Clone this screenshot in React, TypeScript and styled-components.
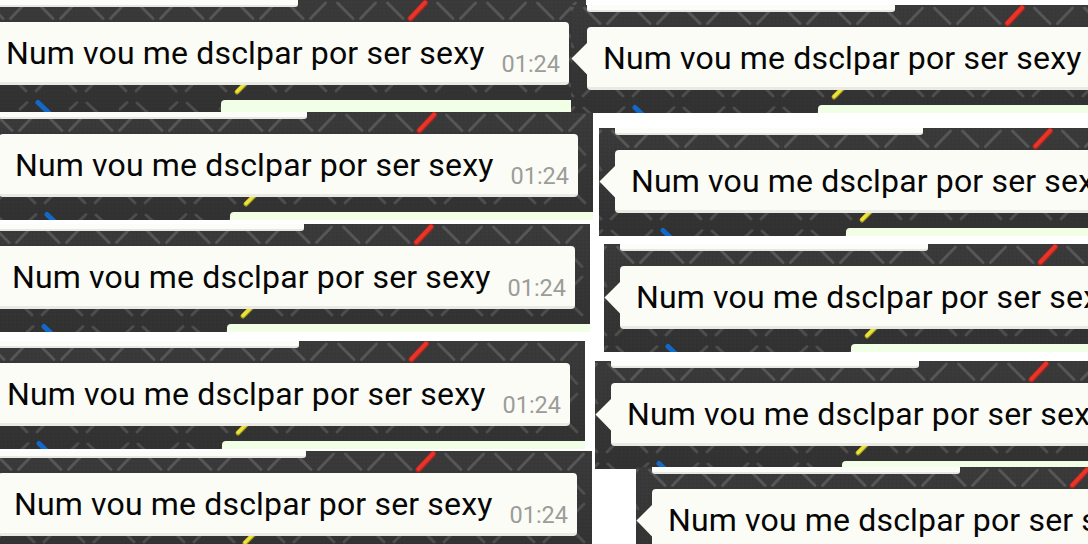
import React from "react";
import styled, { createGlobalStyle } from "styled-components";

interface StripProps {
  x: number; // left edge of the strip
  gap?: number; // white space above
  width?: number;
  height?: number;
}

const leftStrips: StripProps[] = [
  { x: -26, width: 612, height: 112 },
  { x: -17 },
  { x: -20, gap: 4 },
  { x: -25, gap: 9 },
  { x: -18, gap: 2 },
];

const rightStrips: StripProps[] = [
  { x: 0, gap: 5 },
  { x: 28, gap: 15 },
  { x: 33, gap: 8 },
  { x: 24, gap: 9 },
  { x: 65, gap: -2 },
];

const columns = Array.from({ length: 14 }, (_, i) => i - 1);

function Wallpaper() {
  return (
    <WallpaperSvg width="612" height="112" viewBox="-16 0 612 112">
      <defs>
        <linearGradient id="shade" x1="0" y1="0" x2="0" y2="1">
          <stop offset="0" stopColor="#3b3b3c" />
          <stop offset="1" stopColor="#323232" />
        </linearGradient>
        <pattern id="weave" width="4" height="4" patternUnits="userSpaceOnUse">
          <path d="M0 .5H4M.5 0V4" stroke="#000" strokeOpacity=".03" />
        </pattern>
      </defs>
      <rect x="-16" width="612" height="112" fill="url(#shade)" />
      <rect x="-16" width="612" height="112" fill="url(#weave)" />
      <g stroke="#565657" strokeWidth="3" strokeLinecap="round">
        {columns.map((k) => (
          <g key={k} transform={`translate(${k * 50} 0)`}>
            <path d="M47.500 3L63 18.500" />
            {k !== 8 && <path d="M20.500 18.500L35.500 3" />}
            <path d="M27 82L36 91" stroke="#4d4d4d" />
            {k !== 4 && <path d="M46 91L55 82" stroke="#4d4d4d" />}
            <path d="M30 109L37 102.500" stroke="#4d4d4d" />
            {k !== 0 && <path d="M47 103L58 113" stroke="#4d4d4d" />}
          </g>
        ))}
        <path d="M577 33L586 42.500M586 53L578 61M-20 33L-14 42M-14 53L-20 61" stroke="#4d4d4d" />
      </g>
      <g strokeWidth="5" strokeLinecap="round">
        <path d="M420.500 18.500L435 3" stroke="#a8261f" strokeWidth="6" />
        <path d="M420.500 18L435 2.500" stroke="#e8352a" strokeWidth="4" />
        <path d="M247 92L257 82" stroke="#9a931c" />
        <path d="M247 91.500L257 81.500" stroke="#ede23a" strokeWidth="3.500" />
        <path d="M48 102.500L60 114" stroke="#1269c7" />
      </g>
    </WallpaperSvg>
  );
}

function Strip(props: StripProps) {
  return (
    <StripWrapper
      $x={props.x}
      $gap={props.gap ?? 0}
      $width={props.width ?? 610}
      $height={props.height ?? 108}
    >
      <Wallpaper />
      <PreviousMessage />
      <Bubble>
        <Tail width="16" height="32" viewBox="0 0 16 32">
          <path d="M16 0L.5 15.500L16 31.500Z" fill="#fbfcf6" />
        </Tail>
        <Message>Num vou me dsclpar por ser sexy</Message>
        <Time>01:24</Time>
      </Bubble>
      <NextMessage />
    </StripWrapper>
  );
}

export default function App() {
  return (
    <Page>
      <GlobalStyle />
      <LeftColumn>
        {leftStrips.map((strip, i) => (
          <Strip key={i} {...strip} />
        ))}
      </LeftColumn>
      <RightColumn>
        {rightStrips.map((strip, i) => (
          <Strip key={i} {...strip} />
        ))}
      </RightColumn>
    </Page>
  );
}

const GlobalStyle = createGlobalStyle`
  body {
    margin: 0;
    background-color: #fff;
    font-family: Roboto, "Liberation Sans", sans-serif;
  }
`;

const Page = styled.main`
  display: flex;
  width: 1088px;
  height: 544px;
  overflow: hidden;
  background-color: #fff;
`;

const Column = styled.div`
  display: flex;
  flex-direction: column;
  align-items: flex-start;
`;

const LeftColumn = styled(Column)`
  flex: 0 0 571px;
  width: 571px;
`;

const RightColumn = styled(Column)`
  flex: 0 0 517px;
  width: 517px;
  z-index: 1;
`;

const StripWrapper = styled.section<{
  $x: number;
  $gap: number;
  $width: number;
  $height: number;
}>`
  position: relative;
  display: flex;
  flex-direction: column;
  flex-shrink: 0;
  box-sizing: border-box;
  width: ${(props) => props.$width}px;
  height: ${(props) => props.$height}px;
  margin-top: ${(props) => props.$gap}px;
  margin-left: ${(props) => props.$x}px;
  padding-left: 16px;
  overflow: hidden;
`;

const WallpaperSvg = styled.svg`
  position: absolute;
  top: 0;
  left: 0;
`;

const PreviousMessage = styled.div`
  position: relative;
  flex-shrink: 0;
  box-sizing: border-box;
  width: 308px;
  height: 7px;
  background-color: #fcfcf9;
  border-bottom: 2px solid #e7e8e3;
  border-radius: 0 0 3px 3px;
`;

const Bubble = styled.div`
  position: relative;
  display: flex;
  flex-shrink: 0;
  align-items: baseline;
  box-sizing: border-box;
  width: 579px;
  height: 63px;
  margin-top: 15px;
  padding: 12px 9px 0 16px;
  background-color: #fbfcf6;
  border-bottom: 3px solid #e9eae4;
  border-radius: 4px;
`;

const Tail = styled.svg`
  position: absolute;
  top: 16px;
  left: -16px;
`;

const Message = styled.span`
  color: #060606;
  font-size: 32px;
  line-height: 38px;
  letter-spacing: 0.16px;
  white-space: nowrap;
`;

const Time = styled.time`
  position: relative;
  top: 8px;
  margin-left: auto;
  color: #9c9d99;
  font-size: 23.5px;
  line-height: 28px;
`;

const NextMessage = styled.div`
  position: relative;
  flex: 1 0 auto;
  margin-top: 15px;
  margin-left: 231px;
  background-color: #f0ffe5;
  border-radius: 4px 0 0 0;
`;
